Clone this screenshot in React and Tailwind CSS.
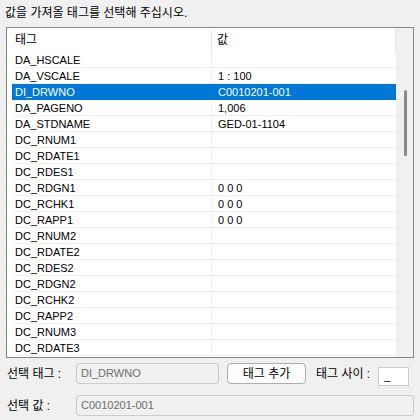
import React from 'react';

const rows = [
  { tag: 'DA_HSCALE', val: '' },
  { tag: 'DA_VSCALE', val: '1 : 100' },
  { tag: 'DI_DRWNO', val: 'C0010201-001', selected: true },
  { tag: 'DA_PAGENO', val: '1,006' },
  { tag: 'DA_STDNAME', val: 'GED-01-1104' },
  { tag: 'DC_RNUM1', val: '' },
  { tag: 'DC_RDATE1', val: '' },
  { tag: 'DC_RDES1', val: '' },
  { tag: 'DC_RDGN1', val: '0 0 0' },
  { tag: 'DC_RCHK1', val: '0 0 0' },
  { tag: 'DC_RAPP1', val: '0 0 0' },
  { tag: 'DC_RNUM2', val: '' },
  { tag: 'DC_RDATE2', val: '' },
  { tag: 'DC_RDES2', val: '' },
  { tag: 'DC_RDGN2', val: '' },
  { tag: 'DC_RCHK2', val: '' },
  { tag: 'DC_RAPP2', val: '' },
  { tag: 'DC_RNUM3', val: '' },
  { tag: 'DC_RDATE3', val: '' },
];

const font = { fontFamily: '"Liberation Sans", "Noto Sans CJK KR", sans-serif' };

export default function App() {
  return (
    <div className="w-[420px] h-[420px] bg-[#f0f0f0] text-black overflow-hidden" style={font}>
      {/* 안내 문구 */}
      <div className="h-[27px] pl-[5px] pt-[5px] text-[12px] leading-[16px]">값을 가져올 태그를 선택해 주십시오.</div>

      {/* 태그 목록 */}
      <div className="ml-[6px] w-[408px] h-[331px] border border-[#828790] bg-white flex">
        <div className="flex-1 pl-[5px] flex flex-col">
          <div className="h-[24px] flex text-[12px]">
            <div className="w-[200px] flex">
              <div className="flex-1 pl-[3px] flex items-center">태그</div>
              <div className="w-px mt-[2px] bg-[#e5e5e5]" />
            </div>
            <div className="flex-1 flex">
              <div className="flex-1 pl-[5px] flex items-center">값</div>
              <div className="w-px bg-[#e5e5e5]" />
            </div>
          </div>
          {rows.map((r) => (
            <div
              key={r.tag}
              className={`h-[16px] flex text-[11px] leading-[16px] ${r.selected ? 'bg-[#0078d7] text-white' : 'border-b border-[#f0f0f0]'}`}
            >
              <div className={`w-[200px] pl-[3px] ${r.selected ? '' : 'border-r border-[#f0f0f0]'}`}>{r.tag}</div>
              <div className="flex-1 pl-[6px]">{r.val}</div>
            </div>
          ))}
        </div>
        <div className="w-[17px] bg-[#f0f0f0] flex justify-center">
          <div className="w-[3px] h-[66px] mt-[62px] ml-[1px] rounded-full bg-[#8a8a8a]" />
        </div>
      </div>

      {/* 선택 영역 */}
      <div className="mt-[5px] pl-[7px] flex items-start">
        <div className="w-[69px] h-[21px] flex items-center text-[12px]">선택 태그 :</div>
        <div className="w-[143px] h-[21px] border border-[#cccccc] rounded-[3px] bg-[#f0f0f0] pl-[4px] flex items-center text-[11px] text-[#6d6d6d]">DI_DRWNO</div>
        <button className="ml-[8px] w-[79px] h-[21px] border border-[#adadad] rounded-[4px] bg-[#fdfdfd] text-[12px] flex items-center justify-center">태그 추가</button>
        <div className="ml-[10px] h-[21px] flex items-center text-[12px]">태그 사이 :</div>
        <div className="ml-[8px] mt-[4px] w-[31px] h-[19px] border border-[#cccccc] bg-white pl-[5px] text-[11px] leading-[16px]">_</div>
      </div>
      <div className="mt-[9px] pl-[7px] flex items-start">
        <div className="w-[69px] h-[21px] flex items-center text-[12px]">선택 값 :</div>
        <div className="w-[338px] h-[21px] border border-[#cccccc] rounded-[3px] bg-[#f0f0f0] pl-[4px] flex items-center text-[11px] text-[#6d6d6d]">C0010201-001</div>
      </div>
    </div>
  );
}
